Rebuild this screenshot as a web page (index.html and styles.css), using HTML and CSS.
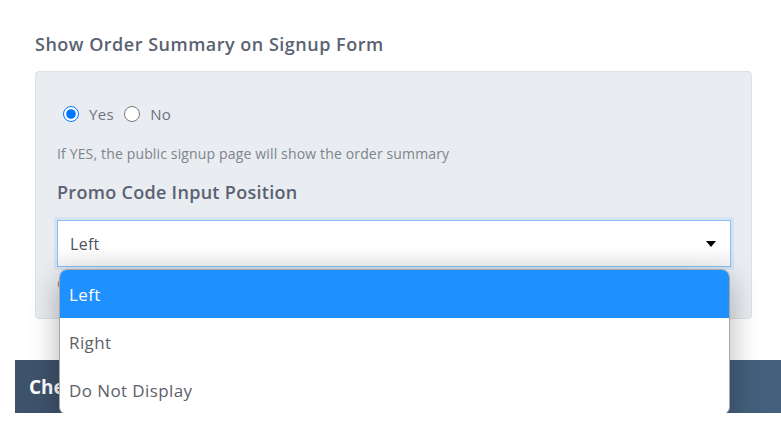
FILE: index.html
```html
<!DOCTYPE html>
<html>
<head>
<meta charset="utf-8">
<link rel="stylesheet" href="styles.css">
</head>
<body>
<div class="page">
  <section class="section">
    <h3 class="title">Show Order Summary on Signup Form</h3>
    <div class="panel">
      <div class="radios">
        <label class="radio"><input type="radio" name="os" checked> <span>Yes</span></label>
        <label class="radio"><input type="radio" name="os"> <span>No</span></label>
      </div>
      <p class="help">If YES, the public signup page will show the order summary</p>
      <h4 class="label">Promo Code Input Position</h4>
      <div class="select-wrap">
        <div class="select">
          <span>Left</span>
          <svg class="caret" width="10" height="6" viewBox="0 0 10 6"><path d="M0 0H10L5 6Z" fill="#000"/></svg>
        </div>
        <ul class="menu">
          <li class="opt active">Left</li>
          <li class="opt">Right</li>
          <li class="opt">Do Not Display</li>
        </ul>
      </div>
      <p class="help help2">Choose where the promo code input is displayed</p>
    </div>
  </section>
  <div class="bar">Checkout Settings</div>
</div>
</body>
</html>
```
FILE: styles.css
```css
* { box-sizing: border-box; }
body {
  margin: 0;
  background: #fff;
  font-family: "Open Sans", "Noto Sans", sans-serif;
  overflow: hidden;
}
.page {
  padding: 0 0 0 15px;
}
.section {
  padding: 32px 29px 0 20px;
}
.title {
  margin: 0 0 15px;
  font-size: 18px;
  line-height: 24px;
  letter-spacing: 0.5px;
  font-weight: 600;
  color: #5a6272;
}
.panel {
  background: #e9ecf0;
  border: 1px solid #dde1e6;
  border-radius: 4px;
  padding: 30px 20px 25px 21px;
}
.radios {
  display: flex;
  align-items: center;
  gap: 10px;
  height: 24px;
}
.radio {
  display: flex;
  align-items: center;
  font-size: 15px;
  letter-spacing: 0.4px;
  color: #6b7380;
}
.radio input {
  width: 16px;
  height: 16px;
  margin: 0 10px 0 6px;
}
.radio + .radio input { margin-left: 0; }
.help {
  margin: 19px 0 0;
  font-size: 14px;
  line-height: 18px;
  letter-spacing: 0.15px;
  color: #7d848c;
}
.label {
  margin: 18px 0 0;
  font-size: 18px;
  line-height: 22px;
  letter-spacing: 0.3px;
  font-weight: 600;
  color: #5a6272;
}
.select-wrap {
  position: relative;
  margin-top: 17px;
}
.select {
  height: 47px;
  border: 1px solid #86bdf5;
  background: linear-gradient(#fff 55%, #f3f3f3);
  box-shadow: 0 0 0 3px rgba(130, 185, 240, 0.18);
  display: flex;
  align-items: center;
  justify-content: space-between;
  padding: 0 14px 0 12px;
  font-size: 16px;
  letter-spacing: 0.3px;
  color: #4d5560;
}
.caret { display: block; }
.menu {
  position: absolute;
  left: 2px;
  right: 1px;
  top: 49px;
  margin: 0;
  padding: 0;
  list-style: none;
  background: #fff;
  border: 1px solid #a8a8a8;
  border-radius: 8px;
  overflow: hidden;
  box-shadow: 0 10px 30px rgba(0, 0, 0, 0.3);
  z-index: 5;
}
.opt {
  height: 48px;
  display: flex;
  align-items: center;
  padding-left: 9px;
  font-size: 17px;
  letter-spacing: 0.4px;
  color: #5d6068;
}
.opt.active {
  background: #1e90ff;
  color: #fff;
}
.help2 { margin-top: 8px; }
.bar {
  margin-top: 41px;
  height: 53px;
  background: linear-gradient(90deg, #3e526b, #44607c);
  color: #fff;
  font-size: 19px;
  font-weight: 700;
  display: flex;
  align-items: center;
  padding-left: 14px;
}
```
